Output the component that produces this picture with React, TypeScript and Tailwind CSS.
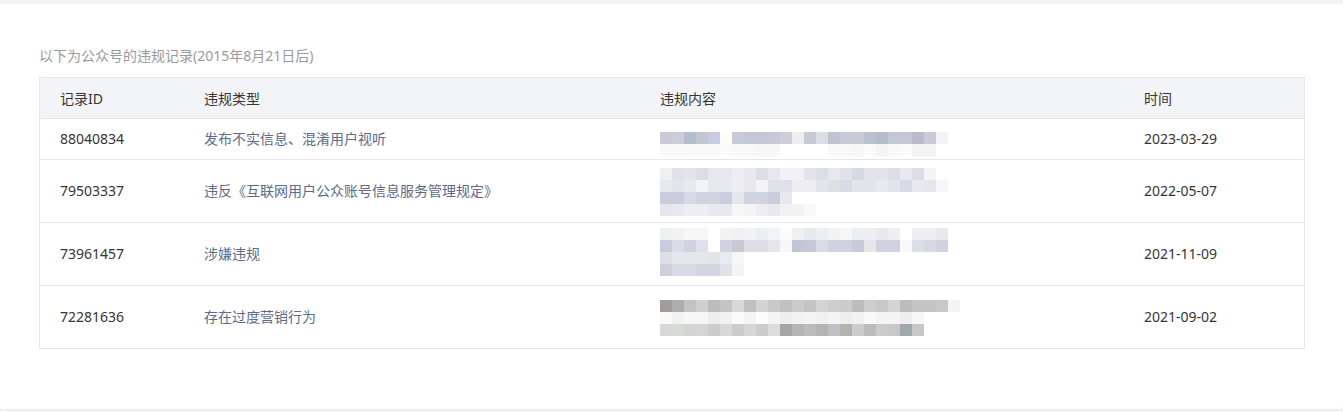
import React from "react";

type Mosaic = { offset: number; lines: string[][] };

const W = "ffffff";

const rows: { id: string; type: string; date: string; h: string; mosaic: Mosaic }[] = [
  {
    id: "88040834",
    type: "发布不实信息、混淆用户视听",
    date: "2023-03-29",
    h: "h-[41px]",
    mosaic: {
      offset: 13,
      lines: [
        ["c9cad8", "cbcdd9", "b6bccf", "c3c6d2", "c8cce0", "fdfcf9", "c8cbdc", "c2c6d6", "c2c6d6", "c6c9d5", "ccced9", "eceef2", "c6cad7", "dcdde6", "c1c4d1", "c8cbd7", "c8cbd6", "bbc0d1", "b7bccd", "c3c6d3", "c3c6d3", "b7bbcc", "c8cbd7", "f3f4f9"],
        ["f8f8f9", "f8f8f9", "f9f9fb", "f9f9fb", "f9f9fb", "fbfbfb", "f8f8f9", "f8f8f9", "f6f6f8", "f6f6f8", W, W, W, W, "f8f8f9", "f8f8f9", "f6f6f8", "fbfbfc", "f4f4f6", "f8f8f9", "fbfbfc", "f3f3f6", "f3f3f6", W],
      ],
    },
  },
  {
    id: "79503337",
    type: "违反《互联网用户公众账号信息服务管理规定》",
    date: "2022-05-07",
    h: "h-[63px]",
    mosaic: {
      offset: 8,
      lines: [
        ["eeeff3", "dfe0e8", "e2e4ea", "dcdee6", "e6e8ee", "e6e8ee", "eeeef2", "e8e9ee", "dcdee6", "e6e8ee", "f2f2f6", "f2f2f6", "e2e4ea", "dcdee6", "e6e8ee", "e0e2ea", "d6d9e3", "e2e4ea", "e2e4ea", "dcdee6", "e8e9ee", "dcdee6", "f4f4f7"],
        ["e8e9ee", "e2e4ea", "e8e9ee", "f3f3f5", "e8e9ee", "e8e9ee", "eeeef2", "e8e9ee", "f3f3f5", "e0e0e8", "dee1e9", "eeeef2", "eeeef2", "e2e4ea", "dee0e6", "d8dbe5", "e2e4ea", "e2e4ea", "e8e9ee", "e2e4ea", "d8dbe5", "e8e9ee", "e4e6ec", "f6f6f8"],
        ["c8ccdc", "c8ccdc", "d6dae4", "d0d4e0", "d0d4e0", "c8cedf", "e4e6ec", "d0d4e0", "d0d4e0", "c8ccdc", "e6e8ef"],
        ["e4e6ed", "e8e9ee", "eeeef2", "eceef2", "e8e9ee", "e8e9ee", "f6f6f8", "f4f4f6", "eeeef2", "e8e9ee", "f2f2f5", "f2f2f5", "f8f8f9"],
      ],
    },
  },
  {
    id: "73961457",
    type: "涉嫌违规",
    date: "2021-11-09",
    h: "h-[63px]",
    mosaic: {
      offset: 5,
      lines: [
        ["eeeff3", "f2f2f5", "f6f6f8", "f6f6f8", W, "f2f2f5", "f0f0f4", "f2f2f5", "eceef2", "f2f3f6", "fbfbfc", "f0f0f4", "e8e9ee", "eceef2", "f2f2f5", "f6f6f8", "eceef2", "eceef2", "e8e9ee", "eceef2", W, "eeeef2", "eceef2", "e8e9ee"],
        ["c8ccdc", "dadce6", "d0d3df", "dfe1ea", W, "d0d3df", "c8c8d6", "dcdde6", "dcdde6", "e4e6ec", "f6f7f9", "c0c6d6", "c4c8d8", "d8dce6", "d0d3df", "d0d3df", "c8ccd8", "e4e6ec", "d0d3df", "d0d3df", "f9f9fa", "dcdee6", "d6d9e3", "d0d3df"],
        ["dcdde6", "e4e6ec", "e4e6ec", "e4e6ec", "e2e4ea", "e8eaef", "f6f6f8"],
        ["ccd0dc", "d8dbe5", "d8dbe5", "d2d5e0", "d2d5e0", "dfe2ea", "f4f4f7"],
      ],
    },
  },
  {
    id: "72281636",
    type: "存在过度营销行为",
    date: "2021-09-02",
    h: "h-[63px]",
    mosaic: {
      offset: 14,
      lines: [
        ["a09c98", "aaaeae", "c2c2c2", "cfcfcf", "bcbcbc", "c4c4c4", "d8d8d8", "c0c0c0", "d0d4d4", "c8c8c8", "c0c0c0", "cccccc", "c4c4c4", "d4d4d4", "d0cccc", "c8ccd0", "bcbcbc", "d0cccc", "c8c8cc", "d4d4d4", "bcbcbc", "c4c4c8", "c4c4c4", "c8c8c8", "f4f4f6"],
        ["faf9f8", "f2f2f2", "f6f6f6", "f6f6f6", "eeeeee", "f2f2f2", "fafafa", "f4f4f4", "fcfcfc", "f4f4f4", "eeeeee", "f2f2f2", "f4f4f4", "f0f0f0", "f4f4f4", "eeeeee", "f2f2f2", "f8f8f8", "f4f4f4", "f4f4f4", "eeeeee", "f6f6f6"],
        ["d8d8d8", "d8dad8", "d4d4d4", "d4d6d6", "cccccc", "d8d8d8", "cccccc", "d6d6d4", "cccccc", "dcdcdc", "a8a4a4", "b4b4b4", "bcbcbc", "b4b4b4", "c0c0c0", "b0b4ac", "cccccc", "bcbcbc", "c8cccc", "c8c8c8", "a0a8a8", "c4c8c8"],
      ],
    },
  },
];

function MosaicBlock({ m }: { m: Mosaic }) {
  return (
    <div className="flex flex-col" style={{ marginTop: m.offset }}>
      {m.lines.map((line, i) => (
        <div key={i} className="flex h-[12px]">
          {line.map((c, j) => (
            <div key={j} className="h-[12px] w-[12px]" style={{ backgroundColor: `#${c}` }} />
          ))}
        </div>
      ))}
    </div>
  );
}

export default function App() {
  return (
    <div
      className="w-[1343px] h-[412px] bg-[#f3f4f6] pt-[4px] pb-[3px]"
      style={{ fontFamily: '"Noto Sans", "Noto Sans CJK SC", sans-serif' }}
    >
      <div className="h-[405px] bg-white rounded-b-[3px] px-[39px] pt-[42px] shadow-[0_1px_2px_rgba(0,0,0,0.04)]">
        <div className="text-[14px] leading-[20px] text-[#9a9a9a]">以下为公众号的违规记录(2015年8月21日后)</div>
        <div className="mt-[11px] w-[1266px] border-x border-t border-[#e4e6eb] text-[14px] text-[#353535]">
          <div className="grid grid-cols-[164px_456px_484px_1fr] h-[41px] items-center bg-[#f3f4f8] border-b border-[#e4e6eb]">
            <div className="pl-[20px]">记录ID</div>
            <div>违规类型</div>
            <div>违规内容</div>
            <div>时间</div>
          </div>
          {rows.map((r) => (
            <div key={r.id} className={`grid grid-cols-[164px_456px_484px_1fr] ${r.h} items-center border-b border-[#e4e6eb]`}>
              <div className="pl-[20px] pb-[2px]">{r.id}</div>
              <div className="text-[#5d6a8a] pb-[2px]">{r.type}</div>
              <div className="self-start">
                <MosaicBlock m={r.mosaic} />
              </div>
              <div className="pb-[2px]">{r.date}</div>
            </div>
          ))}
        </div>
      </div>
    </div>
  );
}
